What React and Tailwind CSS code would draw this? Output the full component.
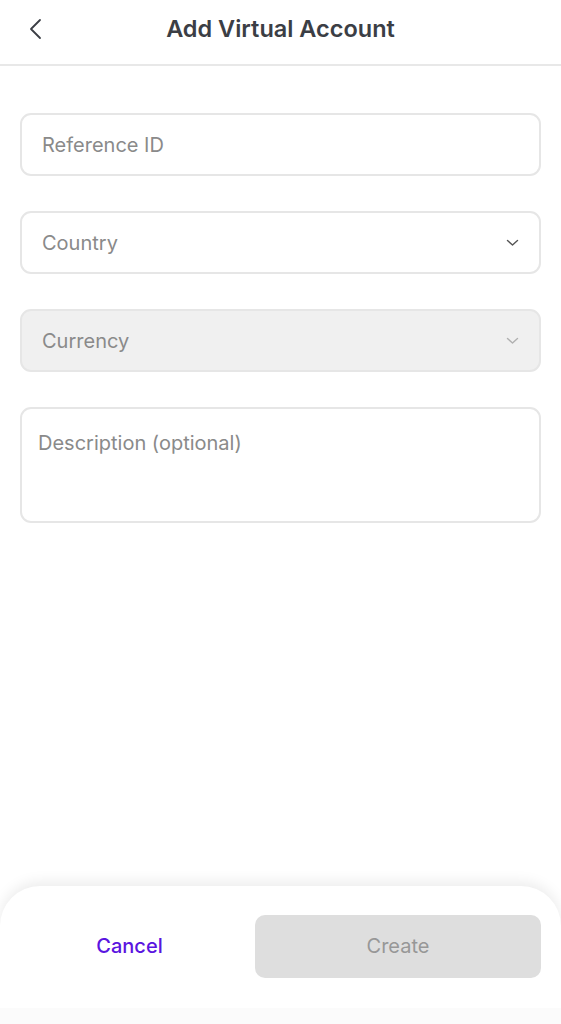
import React from "react";

function Chevron({ className }) {
  return (
    <svg width="13" height="8" viewBox="0 0 13 8" fill="none" className={className}>
      <path d="M1.5 1.5L6.5 6L11.5 1.5" stroke="currentColor" strokeWidth="1.4" strokeLinecap="round" strokeLinejoin="round" />
    </svg>
  );
}

export default function App() {
  return (
    <div className="relative flex flex-col h-[1024px] w-full bg-white overflow-hidden" style={{ fontFamily: "Inter, 'Noto Sans', sans-serif" }}>
      <div className="relative flex items-center justify-center h-[66px] border-b-2 border-[#e8e8e8] shrink-0">
        <button className="absolute left-[26px] top-[18px] text-[#3b3e45]">
          <svg width="18" height="22" viewBox="0 0 18 22" fill="none">
            <path d="M14 2L5 11L14 20" stroke="currentColor" strokeWidth="1.8" strokeLinecap="round" strokeLinejoin="round" />
          </svg>
        </button>
        <h1 className="text-[23.5px] font-semibold text-[#3b3e45] -mt-[6px]">Add Virtual Account</h1>
      </div>

      <div className="flex flex-col gap-[35px] px-[20px] pt-[47px]">
        <div className="flex items-center h-[63px] rounded-[11px] border-2 border-[#e6e6e6] px-[20px] pt-[1px]">
          <span className="text-[20px] text-[#8a8a8a]">Reference ID</span>
        </div>
        <div className="flex items-center justify-between h-[63px] rounded-[11px] border-2 border-[#e6e6e6] pl-[20px] pr-[20px] pt-[1px]">
          <span className="text-[20px] text-[#8a8a8a]">Country</span>
          <Chevron className="text-[#555]" />
        </div>
        <div className="flex items-center justify-between h-[63px] rounded-[11px] border-2 border-[#e6e6e6] bg-[#f0f0f0] pl-[20px] pr-[20px] pt-[1px]">
          <span className="text-[20px] text-[#8a8a8a]">Currency</span>
          <Chevron className="text-[#b0b0b0]" />
        </div>
        <div className="h-[116px] rounded-[11px] border-2 border-[#e6e6e6] px-[16px] pt-[19px]">
          <span className="text-[20px] text-[#8a8a8a]">Description (optional)</span>
        </div>
      </div>

      <div className="mt-auto flex flex-col">
        <div className="flex items-center gap-[16px] h-[122px] pl-[20px] pr-[20px] pb-[2px] rounded-t-[40px] bg-white shadow-[0_-4px_14px_rgba(0,0,0,0.08)]">
          <button className="flex-1 h-[63px] text-[20px] font-medium text-[#5a14e0]">Cancel</button>
          <button className="w-[286px] h-[63px] rounded-[10px] bg-[#dedede] text-[20px] text-[#979797]">Create</button>
        </div>
        <div className="h-[16px] bg-[#fbfbfb]" />
      </div>
    </div>
  );
}
